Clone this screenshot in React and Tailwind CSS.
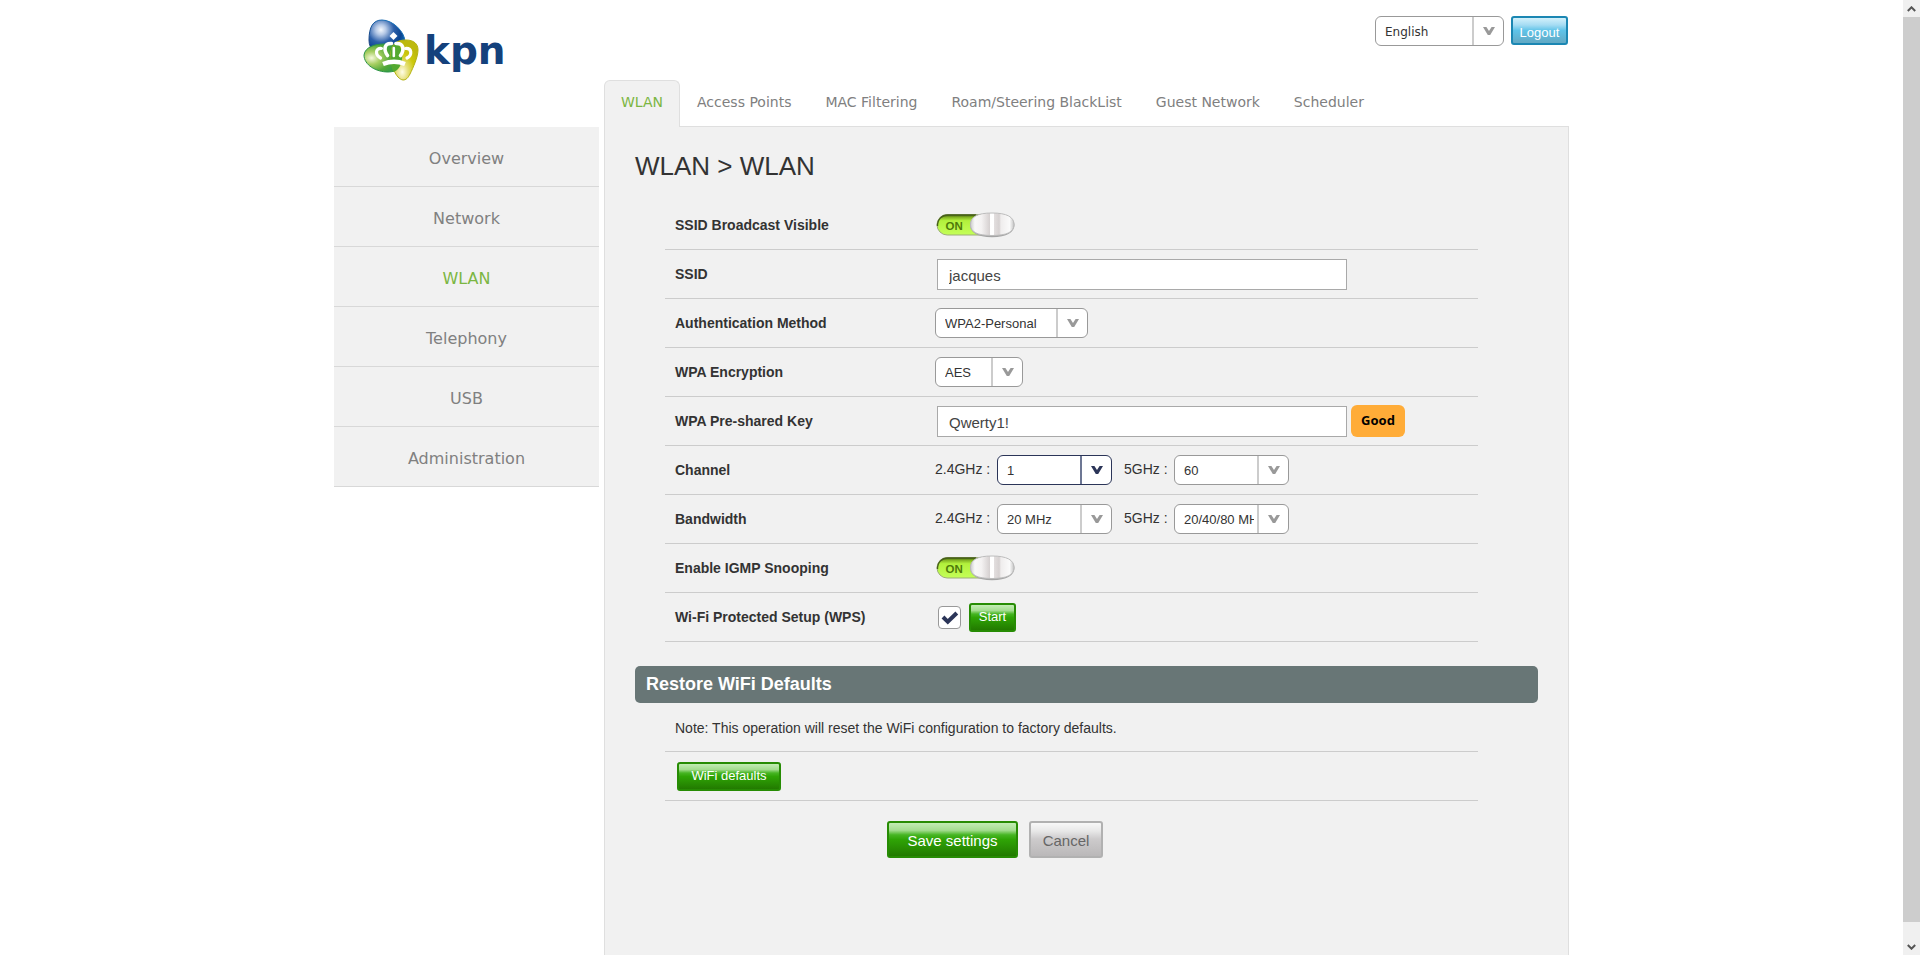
import React, { useId, useState } from "react";

const SANS = "font-['Liberation_Sans',Arial,sans-serif]";
const WIDE = "font-['DejaVu_Sans',Verdana,sans-serif]";

const menu = ["Overview", "Network", "WLAN", "Telephony", "USB", "Administration"];
const tabs = ["WLAN", "Access Points", "MAC Filtering", "Roam/Steering BlackList", "Guest Network", "Scheduler"];

function Logo() {
  return (
    <a href="#home" className="flex items-start" aria-label="kpn home">
      <svg className="h-16 w-[58px] shrink-0" viewBox="0 0 58 64" aria-hidden="true">
        <defs>
          <radialGradient id="lgBlue" cx="0.33" cy="0.28" r="0.72">
            <stop offset="0" stopColor="#f4f8fd" />
            <stop offset="0.2" stopColor="#b4c8e6" />
            <stop offset="0.5" stopColor="#2d60aa" />
            <stop offset="0.8" stopColor="#0b4490" />
            <stop offset="1" stopColor="#0f6ab4" />
          </radialGradient>
          <linearGradient id="lgBlueEdge" x1="0" y1="1" x2="1" y2="0">
            <stop offset="0" stopColor="#15306f" />
            <stop offset="1" stopColor="#1c86cf" />
          </linearGradient>
          <radialGradient id="lgGreen" cx="0.2" cy="0.5" r="0.75">
            <stop offset="0" stopColor="#f6f9dc" />
            <stop offset="0.3" stopColor="#a8cf63" />
            <stop offset="0.65" stopColor="#52a838" />
            <stop offset="1" stopColor="#2f9a4a" />
          </radialGradient>
          <radialGradient id="lgYellow" cx="0.42" cy="0.8" r="0.7">
            <stop offset="0" stopColor="#fffde8" />
            <stop offset="0.3" stopColor="#e6e07c" />
            <stop offset="0.65" stopColor="#cdc90c" />
            <stop offset="1" stopColor="#bdb90e" />
          </radialGradient>
        </defs>
        <path d="M7 22C7 9 11 2 20 2C31 2 43 14 43 24C43 32 36 37 26 37C14 37 7 32 7 22Z" fill="url(#lgBlue)" stroke="url(#lgBlueEdge)" strokeWidth="1" />
        <path d="M2 37C3 29 13 26 22 26C33 26 40 31 40 40C40 49 35 54 26 54C14 54 2 47 2 37Z" fill="url(#lgGreen)" stroke="#2c9447" strokeWidth="1" />
        <path d="M29 34C30 25 36 22 44 22C52 22 56 26 56 32C56 39 51 50 48 56C46 60 44 62 41 62C34 61 28 47 29 34Z" fill="url(#lgYellow)" stroke="#b5b213" strokeWidth="1" />
        <path d="M29 34C29 30 32 26 35 24C39 29 41 35 40 41C39 48 36 53 31 54C29 48 28 41 29 34Z" fill="#53a92f" />
        <path d="M31.500 14L35.500 18L31.500 22L27.500 18Z" fill="#fff" />
        <g fill="none" stroke="#fff" strokeLinecap="round">
          <path d="M19.500 30.500C13 30 13 37 18.500 40" strokeWidth="3.200" />
          <path d="M43.500 30.500C50 30 50.500 37 45 40" strokeWidth="3.200" />
          <path d="M29.500 25.500C22 25 21.500 32 25.500 37.500" strokeWidth="3.600" />
          <path d="M34 25.500C42 25 42.500 32 38.500 37.500" strokeWidth="3.600" />
          <path d="M31.800 30V38" strokeWidth="2.600" />
          <path d="M21 46C28 43.200 36 43.200 43 46" strokeWidth="4.400" strokeLinecap="butt" />
        </g>
      </svg>
      <span className="pl-1 pt-2 font-['DejaVu_Sans',Verdana,sans-serif] text-[39px] font-bold leading-[50px] text-[#14417c]">kpn</span>
    </a>
  );
}

function Select({ id, label, options, width = "w-[115px]", active = false, face = "text-[13px] leading-5" }) {
  const own = useId();
  const selectId = id ?? own;
  return (
    <span className={`relative inline-flex shrink-0 ${width}`}>
      {label && <span id={`${selectId}l`} hidden>{label}</span>}
      <select
        id={selectId}
        aria-labelledby={label ? `${selectId}l` : undefined}
        className={`h-[30px] w-full appearance-none rounded-md border bg-white pl-[9px] pr-[34px] pt-0.5 text-[#333] ${face} ${active ? "border-[#2b3558]" : "border-[#999]"}`}
      >
        {options.map((o) => <option key={o}>{o}</option>)}
      </select>
      <span className={`pointer-events-none absolute inset-y-px right-px flex w-[31px] items-center justify-center border-l-2 ${active ? "border-[#6d7794] text-[#2b3558]" : "border-[#ccc] text-[#999]"}`}>
        <svg className="h-2 w-3" viewBox="0 0 12 8" aria-hidden="true">
          <path d="M0 0H3.400L6 3.900L8.600 0H12L7.200 8H4.800Z" fill="currentColor" />
        </svg>
      </span>
    </span>
  );
}

function Toggle({ id }) {
  const [on, setOn] = useState(true);
  const g = useId();
  return (
    <label htmlFor={id} className="ml-px inline-flex cursor-pointer">
      <input id={id} type="checkbox" role="switch" checked={on} onChange={() => setOn(!on)} className="sr-only" />
      <svg className="h-[26px] w-[79px]" viewBox="0 0 79 26" aria-hidden="true">
        <defs>
          <linearGradient id={`${g}t`} x1="0" y1="0" x2="0" y2="1">
            <stop offset="0" stopColor="#3c5a08" />
            <stop offset="0.140" stopColor="#84b424" />
            <stop offset="0.300" stopColor="#b2f03c" />
            <stop offset="1" stopColor="#c4ff58" />
          </linearGradient>
          <linearGradient id={`${g}k`} x1="0" y1="0" x2="1" y2="0">
            <stop offset="0" stopColor="#cccccc" />
            <stop offset="0.100" stopColor="#f8f8f8" />
            <stop offset="0.250" stopColor="#f4f2f2" />
            <stop offset="0.440" stopColor="#d6d1d1" />
            <stop offset="0.460" stopColor="#ffffff" />
            <stop offset="0.530" stopColor="#ffffff" />
            <stop offset="0.550" stopColor="#e2dede" />
            <stop offset="0.660" stopColor="#d6d1d1" />
            <stop offset="0.700" stopColor="#efeded" />
            <stop offset="0.900" stopColor="#fafafa" />
            <stop offset="1" stopColor="#c4c4c4" />
          </linearGradient>
        </defs>
        <rect x="1" y="2.500" width="60" height="20.500" rx="10.200" fill={`url(#${g}t)`} stroke="#9cae78" strokeWidth="1" />
        <path d="M1.500 14C1.500 7 6 3 12 3H40" fill="none" stroke="#465e1a" strokeWidth="1.400" />
        <text x="9.500" y="17.500" fontFamily="Liberation Sans, Arial, sans-serif" fontSize="11.500" fontWeight="bold" fill="#4f7a0a">ON</text>
        <path d="M34 13C34 6 41 2 56 2S78.500 6 78.500 13S71 25.200 56 25.200S34 20 34 13Z" fill="#a4a4a4" />
        <path d="M34.500 12.500C34.500 5 41 1 56 1S78 5 78 12.500S71 23.500 56 23.500S34.500 20 34.500 12.500Z" fill={`url(#${g}k)`} stroke="#bdbdbd" strokeWidth="1" />
      </svg>
    </label>
  );
}

function Row({ label, htmlFor, children }) {
  return (
    <div className="flex min-h-[49px] items-center border-b border-[#ccc]">
      {htmlFor ? (
        <label htmlFor={htmlFor} className="w-[270px] shrink-0 pl-2.5 text-sm font-bold text-[#333]">{label}</label>
      ) : (
        <span className="w-[270px] shrink-0 pl-2.5 text-sm font-bold text-[#333]">{label}</span>
      )}
      {children}
    </div>
  );
}

function TextField({ id, value }) {
  return (
    <input id={id} type="text" defaultValue={value} className="ml-0.5 h-[31px] w-[410px] border border-[#a9a9a9] bg-white px-[11px] pt-0.5 text-[15px] text-[#444]" />
  );
}

function Bands({ name, low, high, active }) {
  return (
    <>
      <label htmlFor={`${name}24`} className="w-[62px] pb-0.5 text-sm text-[#333]">2.4GHz :</label>
      <Select id={`${name}24`} options={[low]} active={active} />
      <label htmlFor={`${name}5`} className="ml-3 w-[50px] pb-0.5 text-sm text-[#333]">5GHz :</label>
      <Select id={`${name}5`} options={[high]} />
    </>
  );
}

const buttonTones = {
  green: "border-[#278c04] text-white bg-[linear-gradient(#c3edb5_0%,#a4dd90_22%,#46b523_36%,#2fa406_50%,#227a00_100%)]",
  blue: "border-[#1b87b3] text-white bg-[linear-gradient(#d3f1fb_0%,#a5dcf3_28%,#5fc3e8_50%,#62a9c4_100%)]",
  gray: "border-[#b1b1b1] text-[#666] bg-[linear-gradient(#f8f8f8_0%,#e8e8e8_24%,#cdcbcc_48%,#bab8b9_100%)]",
};

function Button({ tone = "green", size = "h-[29px] text-[13px]", className = "", children }) {
  return (
    <button type="button" className={`flex items-center justify-center rounded-[3px] border-2 leading-4 ${buttonTones[tone]} ${size} ${className}`}>
      {children}
    </button>
  );
}

function Scrollbar() {
  return (
    <div className="flex w-[17px] shrink-0 flex-col bg-[#f0f0f0] text-[#555]" aria-hidden="true">
      <div className="flex h-[17px] items-center justify-center">
        <svg className="h-1.5 w-[9px]" viewBox="0 0 9 6"><path d="M0.800 5L4.500 1.300L8.200 5" fill="none" stroke="currentColor" strokeWidth="2" /></svg>
      </div>
      <div className="flex-1 bg-[#cdcdcd]" />
      <div className="flex h-[33px] items-end justify-center pb-[5px]">
        <svg className="h-1.5 w-[9px]" viewBox="0 0 9 6"><path d="M0.800 1L4.500 4.700L8.200 1" fill="none" stroke="currentColor" strokeWidth="2" /></svg>
      </div>
    </div>
  );
}

export default function App() {
  return (
    <div className={`flex min-h-screen bg-white ${SANS}`}>
      <div className="flex flex-1 justify-center">
        <div className="flex w-full max-w-[1235px] gap-[5px]">
          <div className="w-[265px] shrink-0">
            <div className="h-[127px] pl-7 pt-[18px]"><Logo /></div>
            <nav className={WIDE} aria-label="Main">
              {menu.map((item) => (
                <a key={item} href={`#${item.toLowerCase()}`} className={`flex h-[60px] items-center justify-center border-b border-[#d8d8d8] bg-[#f1f1f1] pt-1 text-base ${item === "WLAN" ? "text-[#7bb642]" : "text-[#808080]"}`}>
                  {item}
                </a>
              ))}
            </nav>
          </div>

          <div className="flex min-w-0 flex-1 flex-col">
            <header className="flex h-20 items-start justify-end gap-[7px] pr-px pt-4">
              <Select label="Language" options={["English"]} width="w-[129px]" face="font-['DejaVu_Sans',Verdana,sans-serif] text-xs leading-5" />
              <Button tone="blue" className="w-[57px] pt-1">Logout</Button>
            </header>
            <nav className={`relative -mb-px flex ${WIDE}`} aria-label="WLAN sections">
              {tabs.map((tab, i) => (
                <a key={tab} href={`#tab${i}`} className={`flex h-[47px] items-center rounded-t-md border border-b-0 px-4 pb-1 text-sm ${i === 0 ? "border-[#dfdfdf] bg-[#f1f1f1] text-[#7bb642]" : "border-transparent text-[#808080]"}`}>
                  {tab}
                </a>
              ))}
            </nav>

            <main className="flex-1 border border-b-0 border-[#dfdfdf] bg-[#f1f1f1] px-[30px] pb-24 pt-6 text-[#333]">
              <h1 className="mb-5 text-[26px] leading-[30px]">WLAN &gt; WLAN</h1>
              <form onSubmit={(e) => e.preventDefault()}>
                <div className="ml-[30px] mr-[60px]">
                  <Row label="SSID Broadcast Visible" htmlFor="broadcast"><Toggle id="broadcast" /></Row>
                  <Row label="SSID" htmlFor="ssid"><TextField id="ssid" value="jacques" /></Row>
                  <Row label="Authentication Method" htmlFor="auth"><Select id="auth" options={["WPA2-Personal"]} width="w-[153px]" /></Row>
                  <Row label="WPA Encryption" htmlFor="encryption"><Select id="encryption" options={["AES"]} width="w-[88px]" /></Row>
                  <Row label="WPA Pre-shared Key" htmlFor="psk">
                    <TextField id="psk" value="Qwerty1!" />
                    <output htmlFor="psk" className="ml-1 flex h-8 w-[54px] items-center justify-center rounded-md bg-[#ffac38] font-['Noto_Sans',Tahoma,sans-serif] text-[13px] font-bold text-black">Good</output>
                  </Row>
                  <Row label="Channel"><Bands name="channel" low="1" high="60" active /></Row>
                  <Row label="Bandwidth"><Bands name="bandwidth" low="20 MHz" high="20/40/80 MHz" /></Row>
                  <Row label="Enable IGMP Snooping" htmlFor="igmp"><Toggle id="igmp" /></Row>
                  <Row label="Wi-Fi Protected Setup (WPS)" htmlFor="wps">
                    <span className="relative ml-[3px] mr-2 inline-flex h-[23px] w-[23px]">
                      <input id="wps" type="checkbox" defaultChecked className="peer h-full w-full appearance-none rounded border border-[#999] bg-white" />
                      <svg className="pointer-events-none absolute inset-0 hidden h-full w-full peer-checked:block" viewBox="0 0 23 23" aria-hidden="true">
                        <path d="M5 11L9.800 15.800L18.800 7" fill="none" stroke="#2b3558" strokeWidth="4" />
                      </svg>
                    </span>
                    <Button className="w-[47px]">Start</Button>
                  </Row>
                </div>

                <h2 className="mt-6 flex h-[37px] items-center rounded-[5px] bg-[#687676] px-[11px] pb-0.5 text-lg font-bold text-white">Restore WiFi Defaults</h2>
                <div className="ml-[30px] mr-[60px]">
                  <p className="flex min-h-[49px] items-center border-b border-[#ccc] pl-2.5 pt-0.5 text-sm">Note: This operation will reset the WiFi configuration to factory defaults.</p>
                  <div className="flex min-h-[49px] items-center border-b border-[#ccc] pl-3">
                    <Button className="w-[104px]">WiFi defaults</Button>
                  </div>
                </div>

                <div className="mt-5 flex gap-[11px] pl-[252px]">
                  <Button size="h-[37px] text-[15px]" className="w-[131px] pt-0.5">Save settings</Button>
                  <Button size="h-[37px] text-[15px]" tone="gray" className="w-[74px] pt-0.5">Cancel</Button>
                </div>
              </form>
            </main>
          </div>
        </div>
      </div>
      <Scrollbar />
    </div>
  );
}
